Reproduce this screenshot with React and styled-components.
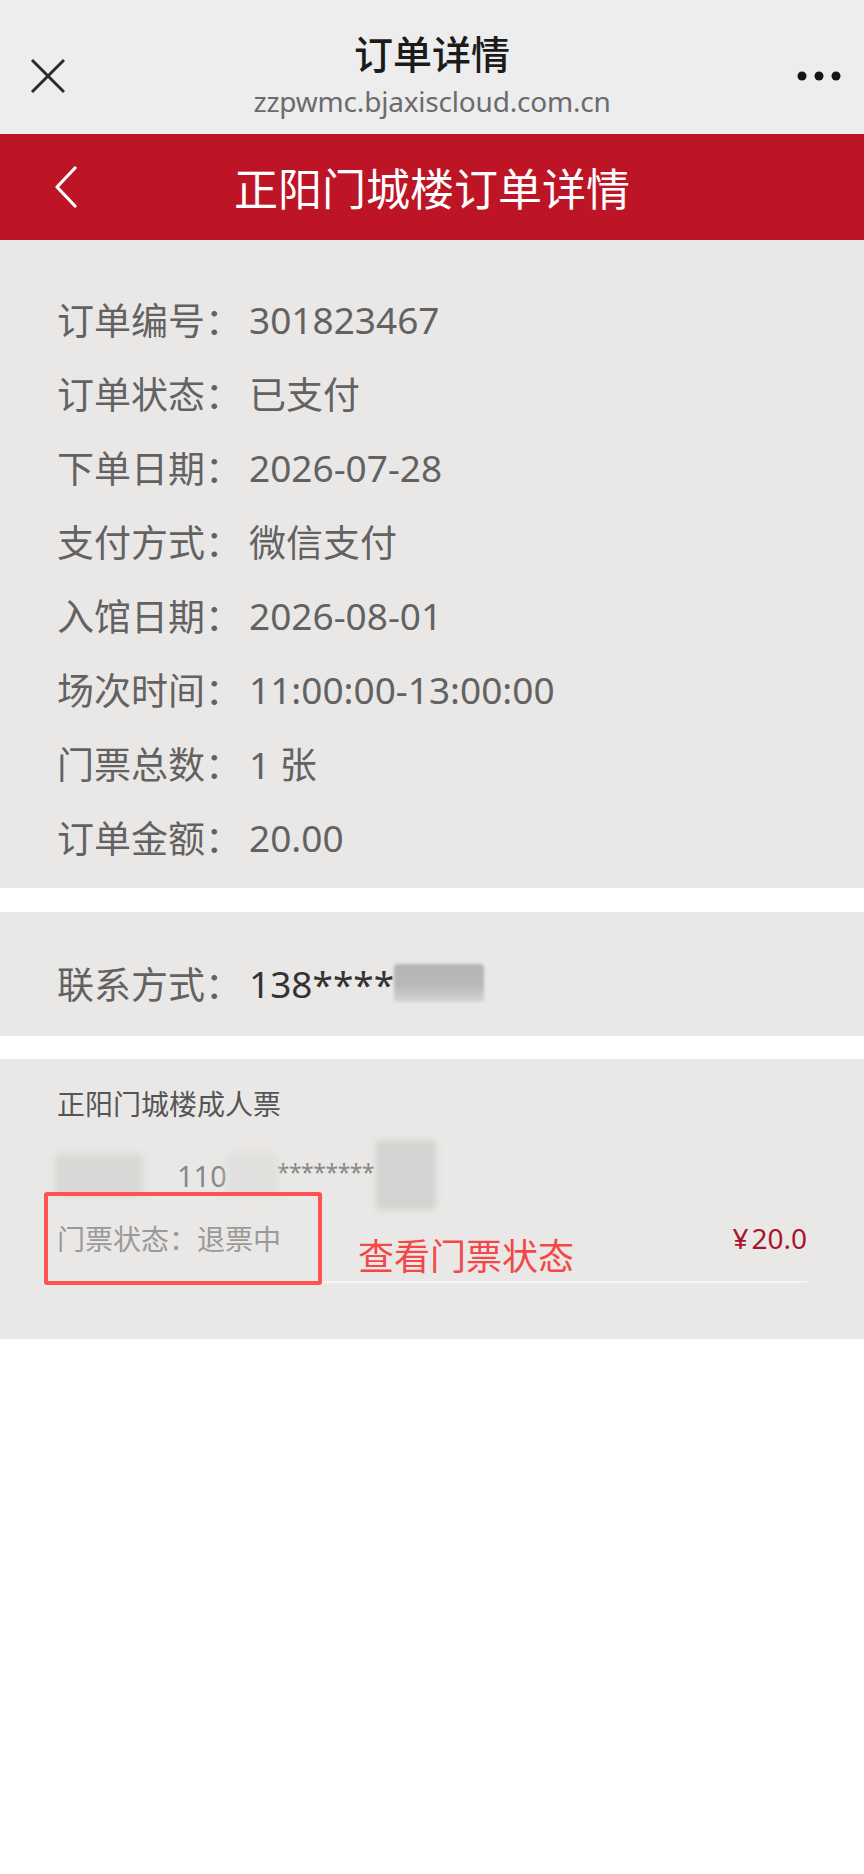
import styled, { createGlobalStyle } from 'styled-components';

const GlobalStyle = createGlobalStyle`
    html, body {
        margin: 0;
        padding: 0;
        background: #ffffff;
    }
    body {
        font-family: "Noto Sans", "Noto Sans CJK SC", sans-serif;
        -webkit-font-smoothing: antialiased;
    }
`;

const Page = styled.div`
    width: 864px;
    min-height: 1874px;
    background: #ffffff;
`;

const TopBar = styled.div`
    height: 134px;
    background: #ededed;
    display: grid;
    grid-template-columns: 94px 1fr 94px;
    align-items: center;
`;

const TopIcon = styled.div`
    display: flex;
    justify-content: ${props => (props.right ? 'flex-start' : 'center')};
    padding-left: ${props => (props.right ? '26px' : '0')};
    padding-top: 18px;
`;

const TitleBlock = styled.div`
    display: flex;
    flex-direction: column;
    align-items: center;
    padding-top: 12px;
`;

const PageTitle = styled.div`
    font-family: "Noto Sans CJK SC", sans-serif;
    font-size: 39px;
    font-weight: 500;
    line-height: 52px;
    color: #1b1b1b;
`;

const Url = styled.div`
    font-family: "Noto Sans", sans-serif;
    font-size: 28px;
    line-height: 38px;
    margin-top: 4px;
    color: #6b6b6b;
    letter-spacing: -0.2px;
`;

const Header = styled.div`
    height: 106px;
    background: #bd1525;
    display: flex;
    align-items: center;
`;

const BackBtn = styled.div`
    width: 120px;
    display: flex;
    justify-content: center;
    padding-left: 12px;
    box-sizing: border-box;
`;

const HeaderTitle = styled.div`
    flex: 1;
    text-align: center;
    padding-right: 120px;
    font-family: "Noto Sans CJK SC", sans-serif;
    font-size: 44px;
    color: #ffffff;
    line-height: 60px;
`;

const Section = styled.div`
    background: #eae8e6;
    padding: ${props => props.pad};
    margin-bottom: ${props => props.gap || '0'};
`;

const InfoRow = styled.div`
    display: flex;
    height: 74px;
    align-items: center;
    font-size: 37px;
    color: #626262;
    font-family: "Noto Sans", "Noto Sans CJK SC", sans-serif;
`;

const Label = styled.span`
    font-family: "Noto Sans CJK SC", sans-serif;
    width: 192px;
    flex-shrink: 0;
`;

const Value = styled.span`
    color: ${props => props.color || '#626262'};
    display: flex;
    align-items: center;
`;

const Blur = styled.span`
    display: inline-block;
    width: ${props => props.w}px;
    height: ${props => props.h}px;
    background: ${props => props.tone};
    filter: blur(${props => props.b || 2}px);
    margin-left: ${props => props.ml || 0}px;
    border-radius: 4px;
`;

const TicketName = styled.div`
    font-family: "Noto Sans CJK SC", sans-serif;
    font-size: 28px;
    line-height: 40px;
    color: #555555;
`;

const IdRow = styled.div`
    margin-top: 24px;
    height: 56px;
    display: flex;
    align-items: center;
    font-size: 29px;
    color: #888888;
`;

const IdNum = styled.span`
    margin-left: 34px;
`;

const Stars = styled.span`
    font-size: 23px;
    color: #888888;
    margin-top: -6px;
    letter-spacing: -0.5px;
`;

const StatusRow = styled.div`
    position: relative;
    display: flex;
    align-items: flex-start;
    padding: 15px 0 5px;
    border-bottom: 2px solid #f6f5f4;
`;

const Status = styled.span`
    font-family: "Noto Sans CJK SC", sans-serif;
    font-size: 28px;
    line-height: 40px;
    color: #9a9a9a;
`;

const Note = styled.span`
    font-family: "Noto Sans CJK SC", sans-serif;
    font-size: 36px;
    line-height: 44px;
    color: #f24848;
    margin: 14px 0 0 77px;
`;

const Price = styled.span`
    margin-left: auto;
    font-size: 28px;
    line-height: 40px;
    color: #a8142c;
`;

const Yen = styled.span`
    margin-right: 3px;
`;

const Mark = styled.div`
    position: absolute;
    left: -13px;
    top: -11px;
    width: 278px;
    height: 93px;
    box-sizing: border-box;
    border: 4px solid #ff5252;
    border-radius: 3px;
`;

const info = [
    ['订单编号：', '301823467'],
    ['订单状态：', '已支付'],
    ['下单日期：', '2026-07-28'],
    ['支付方式：', '微信支付'],
    ['入馆日期：', '2026-08-01'],
    ['场次时间：', '11:00:00-13:00:00'],
    ['门票总数：', '1 张'],
    ['订单金额：', '20.00'],
];

const App = () => (
    <Page>
        <GlobalStyle />
        <TopBar>
            <TopIcon>
                <svg width="36" height="36" viewBox="0 0 36 36">
                    <path d="M3 2 L35 34 M35 2 L3 34" stroke="#2a2a2a" strokeWidth="3" fill="none" />
                </svg>
            </TopIcon>
            <TitleBlock>
                <PageTitle>订单详情</PageTitle>
                <Url>zzpwmc.bjaxiscloud.com.cn</Url>
            </TitleBlock>
            <TopIcon right>
                <svg width="46" height="12" viewBox="0 0 46 12">
                    <circle cx="6" cy="6" r="4.5" fill="#151515" />
                    <circle cx="23" cy="6" r="4.5" fill="#151515" />
                    <circle cx="40" cy="6" r="4.5" fill="#151515" />
                </svg>
            </TopIcon>
        </TopBar>
        <Header>
            <BackBtn>
                <svg width="26" height="42" viewBox="0 0 26 42">
                    <path d="M22 2 L4 21 L22 40" stroke="#ffffff" strokeWidth="3.2" fill="none" strokeLinecap="round" strokeLinejoin="round" />
                </svg>
            </BackBtn>
            <HeaderTitle>正阳门城楼订单详情</HeaderTitle>
        </Header>
        <Section pad="42px 57px 14px" gap="24px">
            {info.map(([k, v]) => (
                <InfoRow key={k}>
                    <Label>{k}</Label>
                    <Value>{v}</Value>
                </InfoRow>
            ))}
        </Section>
        <Section pad="34px 57px 16px" gap="23px">
            <InfoRow>
                <Label>联系方式：</Label>
                <Value color="#333333">
                    138****
                    <Blur w={90} h={38} tone="linear-gradient(#b3b3b3 0%, #b8b8b8 55%, #d4d4d4 100%)" b={1.5} />
                </Value>
            </InfoRow>
        </Section>
        <Section pad="24px 57px 56px">
            <TicketName>正阳门城楼成人票</TicketName>
            <IdRow>
                <Blur w={88} h={42} tone="#d9d8d6" b={3} ml={-2} />
                <IdNum>110</IdNum>
                <Blur w={50} h={44} tone="#e0dfdd" b={4} />
                <Stars>********</Stars>
                <Blur w={60} h={70} tone="#d4d3d1" b={3} ml={2} />
            </IdRow>
            <StatusRow>
                <Mark />
                <Status>门票状态：退票中</Status>
                <Note>查看门票状态</Note>
                <Price><Yen>¥</Yen>20.0</Price>
            </StatusRow>
        </Section>
    </Page>
);

export default App;
